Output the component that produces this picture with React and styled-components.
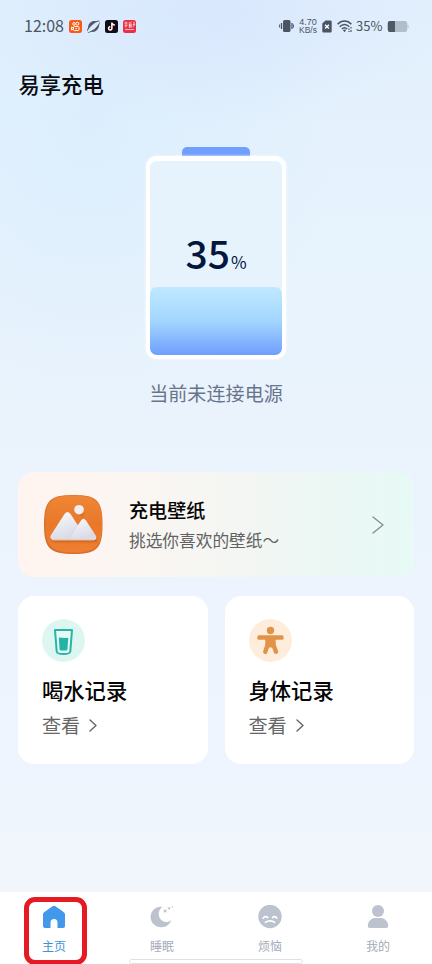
import React from 'react';
import styled, { createGlobalStyle } from 'styled-components';

const GlobalStyle = createGlobalStyle`
  * {
    box-sizing: border-box;
  }
  body {
    margin: 0;
    font-family: 'Noto Sans CJK SC', sans-serif;
  }
  svg {
    display: block;
    flex: none;
  }
`;

const Page = styled.div`
  width: 432px;
  height: 964px;
  overflow: hidden;
  display: flex;
  flex-direction: column;
  background:
    radial-gradient(ellipse 240px 110px at 215px 15px, rgba(214, 229, 253, 0.75), rgba(214, 229, 253, 0) 100%),
    radial-gradient(ellipse 250px 290px at 90px 120px, #dceefd 0%, rgba(220, 238, 253, 0) 100%),
    linear-gradient(180deg, #e2f0fd 0%, #e7f3fd 25%, #ebf3fc 50%, #eff5fe 80%, #f1f6fb 93%);
`;

const StatusBar = styled.div`
  height: 52px;
  padding: 0 24px;
  display: flex;
  align-items: center;
  justify-content: space-between;
  color: #4a5563;
`;

const StatusLeft = styled.div`
  display: flex;
  align-items: center;
`;

const Clock = styled.span`
  width: 45px;
  margin-top: -2px;
  font-size: 16px;
  line-height: 20px;
`;

const AppBadges = styled.div`
  display: flex;
  gap: 5px;
`;

const StatusRight = styled.div`
  display: flex;
  align-items: center;
  margin-right: -1px;
`;

const Speed = styled.div`
  width: 20px;
  margin: 0 4px 0 4px;
  display: flex;
  flex-direction: column;
  align-items: center;
  font-family: 'Liberation Sans', sans-serif;
  font-size: 8.5px;
  line-height: 8px;
  white-space: nowrap;
`;

const SpeedValue = styled.span`
  font-size: 9px;
`;

const Percent = styled.span`
  margin: 0 3px 0 3px;
  width: 28px;
  font-size: 13px;
  line-height: 20px;
  white-space: nowrap;
`;

const Title = styled.h1`
  margin: 16px 0 0 18.5px;
  font-size: 21.3px;
  line-height: 32px;
  font-weight: 500;
  color: #0a0c10;
`;

const BatterySection = styled.div`
  margin-top: 47px;
  display: flex;
  flex-direction: column;
  align-items: center;
`;

const BatteryCap = styled.div`
  width: 68px;
  height: 9px;
  border-radius: 5px 5px 0 0;
  background: #709ffc;
`;

const BatteryBody = styled.div`
  width: 140px;
  height: 203px;
  border: 4px solid #fff;
  border-top-width: 5px;
  border-radius: 11px;
  background: #e7f3fc;
  box-shadow: 0 0 2px 1px rgba(255, 255, 255, 0.45);
  display: flex;
  flex-direction: column;
  justify-content: flex-end;
`;

const Level = styled.div`
  display: flex;
  justify-content: center;
  align-items: baseline;
  margin-bottom: -4px;
  color: #03163f;
  line-height: 58px;
`;

const LevelNumber = styled.span`
  font-size: 39px;
  font-weight: 500;
`;

const LevelUnit = styled.span`
  margin-left: 1px;
  font-size: 17px;
`;

const BatteryFill = styled.div`
  flex: none;
  height: ${props => props.level}%;
  border-radius: 7px;
  background: linear-gradient(180deg, #bfe9ff 0%, #a3d6fe 50%, #6f9efd 100%);
`;

const BatteryState = styled.p`
  margin: 19px 0 0;
  font-size: 19.1px;
  line-height: 30px;
  color: #68748c;
`;

const Cards = styled.div`
  margin: 64px 18px 0;
  display: grid;
  grid-template-columns: 1fr 1fr;
  gap: 19px 17px;
`;

const WallpaperCard = styled.div`
  grid-column: 1 / 3;
  height: 105px;
  padding: 0 30px 0 25px;
  display: flex;
  align-items: center;
  border-radius: 16px;
  background: linear-gradient(90deg, #fff4ef 0%, #fbf6f2 30%, #f3f6f3 58%, #ebf7f4 80%, #e7faf5 100%);
`;

const WallpaperText = styled.div`
  flex: 1;
  margin-left: 25px;
`;

const WallpaperTitle = styled.h3`
  margin: 0;
  font-size: 19.1px;
  line-height: 30px;
  font-weight: 500;
  color: #050505;
`;

const WallpaperHint = styled.p`
  margin: 0;
  font-size: 16.7px;
  line-height: 30px;
  color: #5f6263;
`;

const RecordCard = styled.div`
  height: 168px;
  padding: 23px 24px;
  border-radius: 16px;
  background: #fff;
`;

const RecordIcon = styled.div`
  width: 43px;
  height: 43px;
  border-radius: 50%;
  background: ${props => props.tint};
`;

const RecordTitle = styled.h3`
  margin: 11px 0 0;
  font-size: 21.3px;
  line-height: 34px;
  font-weight: 500;
  color: #050505;
`;

const RecordLink = styled.div`
  margin-top: 2px;
  display: flex;
  align-items: center;
  gap: 9px;
  font-size: 19.1px;
  line-height: 32px;
  color: #666;
`;

const TabBar = styled.div`
  position: relative;
  height: 72px;
  margin-top: auto;
  display: grid;
  grid-template-columns: repeat(4, 1fr);
  background: #fff;
`;

const Tab = styled.div`
  padding-top: 13px;
  display: flex;
  flex-direction: column;
  align-items: center;
  font-size: 12px;
  line-height: 18px;
  color: ${props => (props.$active ? '#3d93d8' : '#a3abb9')};
  & svg {
    margin-bottom: 8px;
  }
`;

const Highlight = styled.div`
  position: absolute;
  left: 24px;
  top: 5px;
  width: 63px;
  height: 68px;
  border: 5px solid #e51a22;
  border-radius: 11px;
`;

const HomeIndicator = styled.div`
  position: absolute;
  left: 129px;
  bottom: 0;
  width: 174px;
  height: 5px;
  border: 1px solid #dfe0e2;
  border-radius: 3px;
  background: #fff;
`;

const KuaishouIcon = () => (
  <svg width="13" height="13" viewBox="0 0 13 13" fill="none" stroke="#fff">
    <rect width="13" height="13" rx="2.5" fill="#fb5a14" stroke="none" />
    <circle cx="5" cy="3.9" r="1.3" />
    <circle cx="8.4" cy="3.7" r="1.5" />
    <rect x="4.5" y="6.5" width="5.5" height="4" rx="1" />
    <path d="M4.5 8L2.6 7v3l1.9-1M6.6 8.5h1.5" />
  </svg>
);

const PlanetIcon = () => (
  <svg width="13" height="13" viewBox="0 0 13 13" fill="#4f5a68">
    <path d="M.3 11.600C-.2 9.500 1 8.500 1.100 7.300 1.300 3.200 5.200.2 9 1.300 11 .2 12.600.1 12.800 1.200 11.500 1 9.500 2 7.200 3.400 4 5.300 1.500 8.800.3 11.600z" />
    <path d="M12.800 1.700C13 3.500 12.200 4.400 12 5.800 11.700 9.700 8 12.800 4.200 11.700 2.200 12.800 1 12.900.6 12.200 2 12 3.600 11.300 5.800 10 9 8.200 11.600 4.500 12.800 1.700z" />
  </svg>
);

const TiktokIcon = () => (
  <svg width="13" height="13" viewBox="0 0 13 13" fill="none">
    <rect width="13" height="13" rx="2.5" fill="#0c0f16" />
    <path d="M6.8 2.4v5.9a1.7 1.7 0 1 1-1.7-1.7M6.8 2.5c.2 1.5 1.3 2.3 2.9 2.4" stroke="#ef4964" strokeWidth="1.5" transform="translate(.4 .3)" />
    <path d="M6.8 2.4v5.9a1.7 1.7 0 1 1-1.7-1.7M6.8 2.5c.2 1.5 1.3 2.3 2.9 2.4" stroke="#fff" strokeWidth="1.3" />
  </svg>
);

const PinduoduoIcon = () => (
  <svg width="13" height="13" viewBox="0 0 13 13" fill="none" stroke="#fff" strokeWidth="0.8">
    <rect width="13" height="13" rx="2.5" fill="#e83145" stroke="none" />
    <path d="M1.5 3h3M3 1.5v6M1.5 6l3-1M5.8 2l1 1.2M8.3 1.700L7.2 3M5.6 4h3.300M5.400 5.900H9M6.500 4v4M8 4v4M10 2l1.600.8L10 4.700l2-.5-2.300 3M2 9.500h9" opacity=".8" />
  </svg>
);

const VibrateIcon = () => (
  <svg width="15" height="14" viewBox="0 0 15 14" fill="none" stroke="#4a5563">
    <rect x="4" y="1" width="7.5" height="12" rx="1.6" fill="#4a5563" stroke="none" />
    <path d="M2.5 4v6M13 4v6" strokeWidth="1.3" />
    <path d="M.6 5.5v3M14.6 5.5v3" />
  </svg>
);

const NoSimIcon = () => (
  <svg width="10" height="13" viewBox="0 0 10 13">
    <path d="M3.4.5H8.5A1.2 1.2 0 0 1 9.7 1.7v9.6a1.2 1.2 0 0 1-1.2 1.2h-7A1.2 1.2 0 0 1 .3 11.3V3.6z" fill="#4a5563" />
    <path d="M3.1 4.8l3.8 3.8M6.9 4.8L3.1 8.6" stroke="#fff" strokeWidth="1.4" />
  </svg>
);

const WifiIcon = () => (
  <svg width="16" height="13" viewBox="0 0 16 13" fill="none" stroke="#4a5563" strokeWidth="1.5">
    <path d="M.6 4.300C4.500 0 10.500 0 14.400 4.300M2.700 6.800c2.900-3.200 6.700-3.200 9.600 0M4.900 9.100c1.600-1.700 3.600-1.700 5.200 0" />
    <path d="M5.900 10L7.500 12.200l1.600-2.200c-.9-.8-2.300-.8-3.200 0z" fill="#4a5563" stroke="none" />
    <path d="M12 8.500v1.500M14 7v1.500M14 10v2M12 11v1" strokeWidth="1.200" />
  </svg>
);

const StatusBattery = () => (
  <svg width="22" height="11" viewBox="0 0 22 11">
    <path d="M3 0h15a2.2 2.2 0 0 1 2.2 2.2v6.6A2.2 2.2 0 0 1 18 11H3A2.2 2.2 0 0 1 .8 8.8V2.2A2.2 2.2 0 0 1 3 0z" fill="#b2bdca" />
    <path d="M3 0h5v11H3A2.2 2.2 0 0 1 .8 8.8V2.2A2.2 2.2 0 0 1 3 0z" fill="#4f5965" />
    <path d="M20.5 3.5c1.5.4 1.5 3.6 0 4z" fill="#b2bdca" />
  </svg>
);

const WallpaperIcon = () => (
  <svg width="61" height="61" viewBox="0 0 61 61">
    <defs>
      <linearGradient id="tile" x1="0" y1="0" x2="0" y2="1">
        <stop offset="0" stopColor="#ee8734" />
        <stop offset="0.5" stopColor="#ea782b" />
        <stop offset="1" stopColor="#ee7f30" />
      </linearGradient>
      <linearGradient id="peak" x1="0" y1="0" x2="0.4" y2="1">
        <stop offset="0" stopColor="#fbfafc" />
        <stop offset="1" stopColor="#d9dbe6" />
      </linearGradient>
      <filter id="soft" x="-20%" y="-20%" width="140%" height="150%">
        <feGaussianBlur stdDeviation="1.3" />
      </filter>
    </defs>
    <path d="M30.5 1C54 1 59.500 6.500 59.500 30.500S54 60 30.500 60 1 54.500 1 30.500 7 1 30.500 1z" fill="#d66f2e" />
    <path d="M30.500 1.400C53 1.400 59 7 59 29.800S53 58.500 30.500 58.500 2.300 52.500 2.300 29.800 8.500 1.400 30.500 1.400z" fill="url(#tile)" />
    <path d="M9 45h45v3H10zM24 19l10 13-5 14zM33 14a5 5 0 0 0 9 4l-3 5z" fill="#b6501b" opacity=".6" filter="url(#soft)" />
    <circle cx="36" cy="15.700" r="4.800" fill="#f2eff2" />
    <path d="M21.500 20Q24.500 16 27.500 20L42 42Q43 45 40 45H10Q6 45 8 41z" fill="url(#peak)" />
    <path d="M30 39l7-11 2 16H27z" fill="#b9bdcc" opacity=".55" filter="url(#soft)" />
    <path d="M38 26.500Q40.500 23 43 26.500L53 42Q54 45 51 45H29Q26.500 45 28 42z" fill="url(#peak)" />
    <path d="M8.500 44.500Q9 45.800 11 45.800H50Q52.500 45.800 53 44" fill="none" stroke="#f5f4f7" strokeWidth="1" />
  </svg>
);

const WaterIcon = () => (
  <svg width="43" height="43" viewBox="0 0 43 43">
    <path d="M13 11h17l-1.700 21.500Q28 35 21.500 35T14.700 32.500z" fill="#e6f9f6" stroke="#29b4a5" strokeWidth="2" strokeLinejoin="round" />
    <path d="M16.800 18.500c3 .2 5.400.8 9.500.2l-.9 11.800q-.1 1.100-1.300 1.100h-5.200q-1.200 0-1.300-1.100z" fill="#20b5a6" />
  </svg>
);

const BodyIcon = () => (
  <svg width="43" height="43" viewBox="0 0 43 43" fill="#e2934a">
    <circle cx="21.500" cy="11.500" r="3.700" />
    <rect x="8.300" y="16.300" width="26.300" height="4.500" rx="1.600" />
    <path d="M16.300 19h10.400v6.500l-1.800 3h-6.800l-1.800-3z" />
    <path d="M18.700 25.500l-2.400 7.300M24.300 25.500l2.700 7.300" stroke="#e2934a" strokeWidth="4.400" strokeLinecap="round" />
  </svg>
);

const HomeIcon = () => (
  <svg width="24" height="24" viewBox="0 0 24 24">
    <path d="M10.500 1.300q1.500-1 3 0l8.400 5.900q1.100.8 1.100 2.200V21q0 2-2 2h-5.500v-5.600a3.500 3.500 0 0 0-7 0V23H3q-2 0-2-2V9.400q0-1.400 1.100-2.200z" fill="#4298eb" />
  </svg>
);

const MoonIcon = () => (
  <svg width="24" height="24" viewBox="0 0 24 24" fill="#bcc3ce">
    <path d="M12.300 2A8.300 8.300 0 0 0 12 15.500c2.800 2.300 6.500 2 9.200-.2C20 19.500 16 22.300 11.500 22.300 5.300 22.300.6 18 .6 12.100.6 6 6 1 12.300 2z" />
    <path d="M13.300 4.300l1.700.6 1.800-.7-.7 1.700.8 1.700-1.700-.6-1.800.7.700-1.700zM17.300 2.300l3.400.1-1.500 2.500zM21.500 1.200h2l-.9 1.500z" />
  </svg>
);

const SadIcon = () => (
  <svg width="24" height="24" viewBox="0 0 24 24" fill="none" stroke="#fff" strokeWidth="1.700">
    <circle cx="12" cy="11.500" r="11.700" fill="#bcc3ce" stroke="none" />
    <path d="M5.300 13.200c.5-2 3.200-2.200 4.300-.6M14.600 12.600c1.100-1.600 3.600-1.400 4.100.6M7.400 17.300c2.400-2 6.800-2 9.200 0" strokeLinecap="round" />
  </svg>
);

const UserIcon = () => (
  <svg width="24" height="24" viewBox="0 0 24 24" fill="#bcc3ce">
    <circle cx="12" cy="6" r="6" />
    <path d="M8.500 13h7c3.300 0 6.700 3.700 6.700 8q0 2-2 2H3.800q-2 0-2-2c0-4.300 3.400-8 6.700-8z" />
  </svg>
);

const Chevron = ({ width, height, color }) => (
  <svg width={width} height={height} viewBox={`0 0 ${width} ${height}`} fill="none">
    <path d={`M1 1L${width - 1} ${height / 2}L1 ${height - 1}`} stroke={color} strokeWidth="1.4" strokeLinecap="round" strokeLinejoin="round" />
  </svg>
);

const records = [
  { title: '喝水记录', tint: '#dcf7f1', icon: <WaterIcon /> },
  { title: '身体记录', tint: '#feeddb', icon: <BodyIcon /> },
];

const tabs = [
  { name: '主页', icon: <HomeIcon />, active: true },
  { name: '睡眠', icon: <MoonIcon /> },
  { name: '烦恼', icon: <SadIcon /> },
  { name: '我的', icon: <UserIcon /> },
];

const App = () => (
  <Page>
    <GlobalStyle />
    <StatusBar>
      <StatusLeft>
        <Clock>12:08</Clock>
        <AppBadges>
          <KuaishouIcon />
          <PlanetIcon />
          <TiktokIcon />
          <PinduoduoIcon />
        </AppBadges>
      </StatusLeft>
      <StatusRight>
        <VibrateIcon />
        <Speed>
          <SpeedValue>4.70</SpeedValue>
          <span>KB/s</span>
        </Speed>
        <NoSimIcon />
        <svg width="5" height="1" />
        <WifiIcon />
        <Percent>35%</Percent>
        <StatusBattery />
      </StatusRight>
    </StatusBar>
    <Title>易享充电</Title>
    <BatterySection>
      <BatteryCap />
      <BatteryBody>
        <Level>
          <LevelNumber>35</LevelNumber>
          <LevelUnit>%</LevelUnit>
        </Level>
        <BatteryFill level={35} />
      </BatteryBody>
      <BatteryState>当前未连接电源</BatteryState>
    </BatterySection>
    <Cards>
      <WallpaperCard>
        <WallpaperIcon />
        <WallpaperText>
          <WallpaperTitle>充电壁纸</WallpaperTitle>
          <WallpaperHint>挑选你喜欢的壁纸～</WallpaperHint>
        </WallpaperText>
        <Chevron width={12} height={18} color="#84908f" />
      </WallpaperCard>
      {records.map(({ title, tint, icon }) => (
        <RecordCard key={title}>
          <RecordIcon tint={tint}>{icon}</RecordIcon>
          <RecordTitle>{title}</RecordTitle>
          <RecordLink>
            查看
            <Chevron width={8} height={13} color="#666" />
          </RecordLink>
        </RecordCard>
      ))}
    </Cards>
    <TabBar>
      {tabs.map(({ name, icon, active }) => (
        <Tab key={name} $active={active}>
          {icon}
          {name}
        </Tab>
      ))}
      <HomeIndicator />
      <Highlight />
    </TabBar>
  </Page>
);

export default App;
